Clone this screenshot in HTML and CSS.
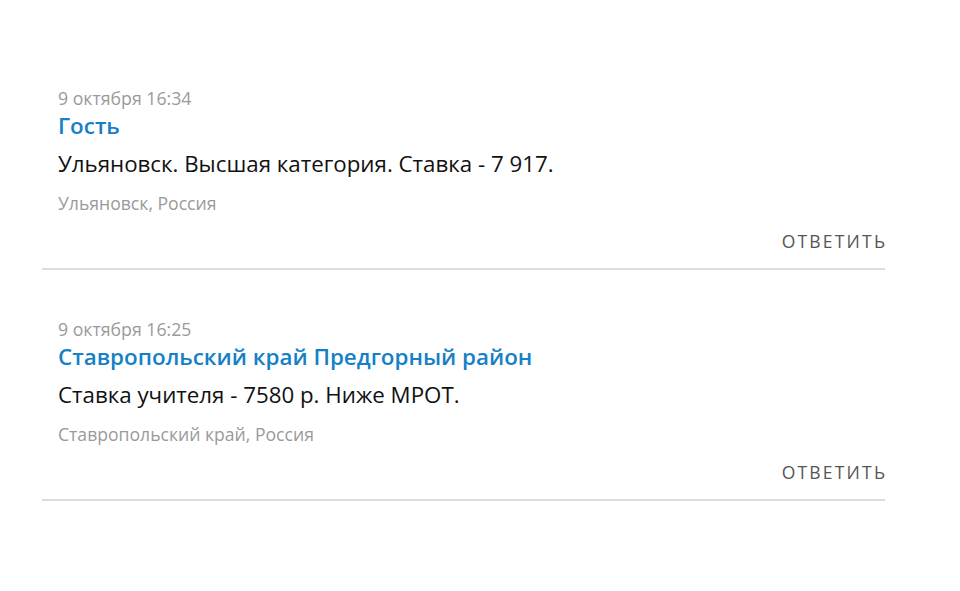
FILE: index.html
```html
<!DOCTYPE html>
<html lang="ru">
<head>
<meta charset="utf-8">
<link rel="stylesheet" href="styles.css">
</head>
<body>
<div class="list">
  <div class="comment">
    <div class="date">9 октября 16:34</div>
    <div class="author">Гость</div>
    <div class="text">Ульяновск. Высшая категория. Ставка - 7 917.</div>
    <div class="place">Ульяновск, Россия</div>
    <div class="actions"><span class="reply">ОТВЕТИТЬ</span></div>
  </div>
  <div class="comment">
    <div class="date">9 октября 16:25</div>
    <div class="author">Ставропольский край Предгорный район</div>
    <div class="text">Ставка учителя - 7580 р. Ниже МРОТ.</div>
    <div class="place">Ставропольский край, Россия</div>
    <div class="actions"><span class="reply">ОТВЕТИТЬ</span></div>
  </div>
</div>
</body>
</html>
```
FILE: styles.css
```css
html, body {
  margin: 0;
  padding: 0;
  background: #fff;
}
body {
  font-family: "Open Sans", "Noto Sans", sans-serif;
}
.list {
  margin-left: 42px;
  width: 843px;
  padding-top: 86px;
}
.comment {
  padding: 0 0 0 16px;
  border-bottom: 2px solid #dcdcdc;
  margin-bottom: 47px;
}
.date {
  font-size: 17.7px;
  line-height: 24px;
  color: #9a9a9a;
}
.author {
  font-size: 22.4px;
  font-weight: 600;
  line-height: 32px;
  color: #1580c6;
  margin-top: 0;
}
.text {
  font-size: 22.3px;
  line-height: 30px;
  color: #111;
  margin-top: 7px;
}
.place {
  font-size: 17.6px;
  line-height: 24px;
  color: #9a9a9a;
  margin-top: 12px;
}
.actions {
  display: flex;
  justify-content: flex-end;
  margin-top: 14px;
  padding-bottom: 15px;
}
.reply {
  font-size: 17.5px;
  line-height: 24px;
  letter-spacing: 2.2px;
  margin-right: -2.2px;
  color: #555;
}
```
